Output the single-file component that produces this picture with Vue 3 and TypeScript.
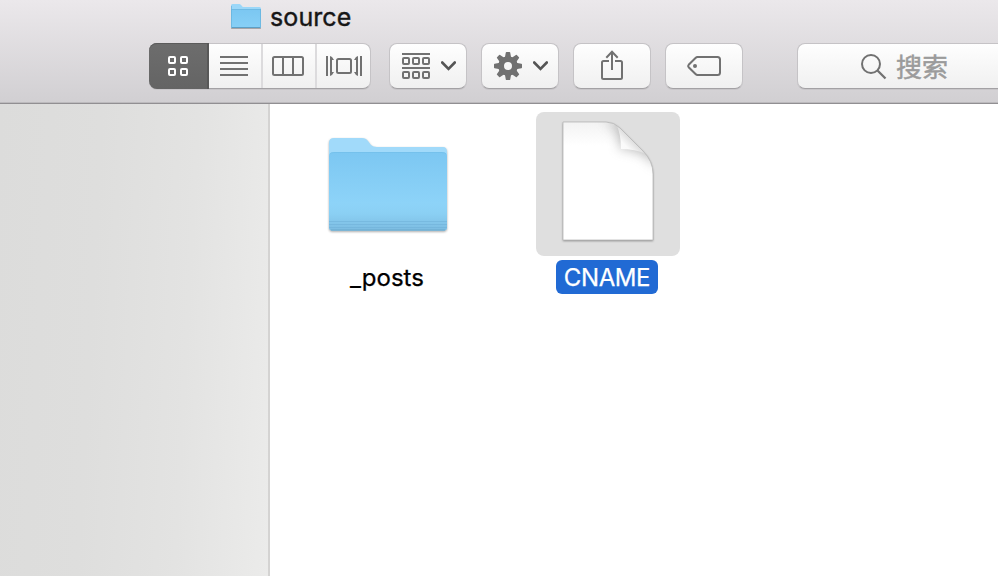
<script setup lang="ts">
import { ref } from 'vue'

type View = 'icons' | 'list' | 'columns' | 'flow'
const views: View[] = ['icons', 'list', 'columns', 'flow']
const active = ref<View>('icons')
const selected = ref('CNAME')
const files = [
  { name: '_posts', kind: 'folder' },
  { name: 'CNAME', kind: 'document' },
]
const teeth = [0, 45, 90, 135, 180, 225, 270, 315]
</script>

<template>
  <div class="window">
    <header class="chrome">
      <div class="title">
        <svg class="title-folder" width="32" height="28" viewBox="0 0 32 28">
          <defs>
            <linearGradient id="smallFront" x1="0" y1="0" x2="0" y2="1">
              <stop offset="0" stop-color="#7bc7f2" />
              <stop offset="1" stop-color="#87d0f6" />
            </linearGradient>
          </defs>
          <path d="M1 26V5.500Q1 4 2.500 4H9.500Q10.500 4 11.500 5.500Q12.500 7 13.500 7H29.500Q31 7 31 8.500V26Q31 28 29.500 28H2.500Q1 28 1 26Z" fill="#9bd7f8" />
          <path d="M1 9.500H31V26.500Q31 28 29.500 28H2.500Q1 28 1 26.500Z" fill="url(#smallFront)" />
          <path d="M1.500 9.500H30.500M1.500 6V27M30.500 9V27" stroke="#62afd9" stroke-width="1" fill="none" opacity=".65" />
          <path d="M1.500 27.500H30.500" stroke="#5c9fc5" />
        </svg>
        <span class="title-text">source</span>
      </div>
      <div class="toolbar">
        <div class="segments">
          <button v-for="v in views" :key="v" class="segment" :class="{ active: active === v }" @click="active = v">
            <svg v-if="v === 'icons'" width="20" height="20" fill="none" stroke="#fff" stroke-width="2">
              <rect x="1" y="1" width="6" height="6" rx="1" /><rect x="13" y="1" width="6" height="6" rx="1" />
              <rect x="1" y="13" width="6" height="6" rx="1" /><rect x="13" y="13" width="6" height="6" rx="1" />
            </svg>
            <svg v-else-if="v === 'list'" width="28" height="20" stroke="#717171" stroke-width="2">
              <path d="M0 1H28M0 7H28M0 13H28M0 19H28" />
            </svg>
            <svg v-else-if="v === 'columns'" width="32" height="20" fill="none" stroke="#717171" stroke-width="2">
              <rect x="1" y="1" width="30" height="18" rx="1.500" /><path d="M11 1V19M21 1V19" />
            </svg>
            <svg v-else width="36" height="20" fill="none" stroke="#717171" stroke-width="2">
              <path d="M1 0V20M35 0V20" />
              <rect x="11" y="3" width="14" height="14" rx="1.500" />
              <path d="M4 0L6 1L8 4L6 4V16L8 16L6 19L4 20ZM32 0L30 1L28 4L30 4V16L28 16L30 19L32 20Z" fill="#717171" stroke="none" />
            </svg>
          </button>
        </div>
        <button class="tool menu">
          <svg width="28" height="26" fill="none" stroke="#717171" stroke-width="2">
            <path d="M0 1H28M0 15H28" />
            <template v-for="y in [5, 19]" :key="y">
              <rect v-for="x in [1, 11, 21]" :key="x" :x="x" :y="y" width="6" height="6" rx="1" />
            </template>
          </svg>
          <svg class="chevron" width="15" height="10"><path d="M1.200 1.500L7.500 8L13.800 1.500" fill="none" stroke="#555" stroke-width="2.600" stroke-linecap="round" /></svg>
        </button>
        <button class="tool menu gear">
          <svg width="28" height="28" viewBox="-14 -14 28 28">
            <circle r="6.900" fill="none" stroke="#717171" stroke-width="5.800" />
            <path v-for="a in teeth" :key="a" d="M-3.200 -8L-2.200 -13.400Q-2.100 -14 -1.500 -14H1.500Q2.100 -14 2.200 -13.400L3.200 -8Z" fill="#717171" :transform="`rotate(${a})`" />
          </svg>
          <svg class="chevron" width="15" height="10"><path d="M1.200 1.500L7.500 8L13.800 1.500" fill="none" stroke="#555" stroke-width="2.600" stroke-linecap="round" /></svg>
        </button>
        <button class="tool">
          <svg width="22" height="30" class="share" fill="none" stroke="#717171" stroke-width="2">
            <path d="M8 11H2.500Q1 11 1 12.500V27.500Q1 29 2.500 29H19.500Q21 29 21 27.500V12.500Q21 11 19.500 11H14" />
            <path d="M11 20V1.500M5.300 7.700L11 1.800L16.700 7.700" />
          </svg>
        </button>
        <button class="tool">
          <svg width="34" height="20" fill="none" stroke="#717171" stroke-width="2">
            <path d="M10.500 1H30.500Q33 1 33 3.500V16.500Q33 19 30.500 19H10.500Q9.500 19 8.500 18L1.700 11.200Q.700 10 1.700 8.800L8.500 2Q9.500 1 10.500 1Z" />
            <circle cx="8" cy="10" r="2" fill="#717171" stroke="none" />
          </svg>
        </button>
        <div class="search">
          <svg width="26" height="26" fill="none" stroke="#717171">
            <circle cx="10" cy="10" r="9" stroke-width="2" /><path d="M16.500 16.500L24.500 24.500" stroke-width="2.300" />
          </svg>
          <span>搜索</span>
        </div>
      </div>
    </header>
    <div class="body">
      <aside class="sidebar"></aside>
      <main class="files">
        <div v-for="f in files" :key="f.name" class="file" :class="{ selected: selected === f.name }" @click="selected = f.name">
          <div class="thumb">
            <svg v-if="f.kind === 'folder'" class="art" width="144" height="144">
              <defs>
                <linearGradient id="front" x1="0" y1="0" x2="0" y2="1">
                  <stop offset="0" stop-color="#7cc7f2" />
                  <stop offset=".65" stop-color="#8dd3f8" />
                  <stop offset=".78" stop-color="#8bd0f4" />
                  <stop offset="1" stop-color="#7cbce1" />
                </linearGradient>
              </defs>
              <g class="folder-shadow">
                <path d="M13 115V31Q13 26 18 26H46Q50 26 52 29L55 33Q57 35 61 35H127Q131 35 131 40V115Q131 118.500 128 118.500H16Q13 118.500 13 115Z" fill="#a1dafa" />
                <path d="M13 44Q13 40 18 40H126Q131 40 131 44V115Q131 118.500 128 118.500H16Q13 118.500 13 115Z" fill="url(#front)" />
                <path d="M14 42Q15 40.500 18 40.500H126Q129 40.500 130 42" fill="none" stroke="#6bb8e4" stroke-width="1" opacity=".4" />
                <path d="M13 109.500H131M13 112.500H131M13 115.500H131" stroke="#6eafd7" opacity=".5" />
                <path d="M15 118H129" stroke="#6ba9cd" />
              </g>
            </svg>
            <svg v-else class="art" width="144" height="144">
              <defs>
                <linearGradient id="paper" x1="0" y1="0" x2="0" y2="1">
                  <stop offset="0" stop-color="#f3f3f3" /><stop offset=".2" stop-color="#fff" />
                </linearGradient>
                <linearGradient id="fold" x1="0" y1="1" x2=".5" y2=".5">
                  <stop offset="0" stop-color="#fff" /><stop offset=".6" stop-color="#fafafa" /><stop offset="1" stop-color="#dedede" />
                </linearGradient>
                <clipPath id="sheet"><path d="M27 10H70Q78 10 84 16L107 39Q117 49 117 62V128H27Z" /></clipPath>
                <filter id="soft" x="-50%" y="-50%" width="200%" height="200%"><feGaussianBlur stdDeviation="6" /></filter>
              </defs>
              <path class="paper-shadow" d="M27 10H70Q78 10 84 16L107 39Q117 49 117 62V128H27Z" fill="url(#paper)" />
              <g clip-path="url(#sheet)">
                <path d="M65 6Q85 14 84 37Q106 36 122 56L120 16Z" fill="#777" opacity=".5" filter="url(#soft)" />
                <path d="M80 12Q85 21 85 37Q99 37 110 42Z" fill="url(#fold)" />
              </g>
              <path d="M27 10H70Q78 10 84 16L107 39Q117 49 117 62V128H27Z" fill="none" stroke="#b8b8b8" stroke-width=".8" />
            </svg>
          </div>
          <span class="label">{{ f.name }}</span>
        </div>
      </main>
    </div>
  </div>
</template>

<style>
body { margin: 0; overflow: hidden; }
</style>

<style scoped>
.window { width: 998px; height: 576px; display: flex; flex-direction: column; overflow: hidden; background: #fff; font-family: Inter, "Noto Sans CJK SC", sans-serif; }
.chrome { box-sizing: border-box; height: 104px; flex: none; background: linear-gradient(#ebe8eb, #d1cfd2); border-bottom: 1px solid #918f92; box-shadow: inset 0 -1px #bcbabd; overflow: hidden; }
.title { height: 43px; display: flex; align-items: flex-start; padding-left: 230px; }
.title-folder { flex: none; filter: drop-shadow(0 1px .5px #0004); }
.title-text { margin-left: 8px; font-size: 25px; line-height: 34px; letter-spacing: .1px; color: #161616; -webkit-text-stroke: .4px #161616; }
.toolbar { display: flex; padding-left: 149px; width: max-content; }
button { appearance: none; border: 0; padding: 0; margin: 0; background: none; }
svg { display: block; flex: none; }
.segments, .tool, .search { box-sizing: border-box; height: 46px; border: 1px solid #c5c3c6; border-bottom-color: #a3a1a4; border-radius: 8px; background: linear-gradient(#fefefe, #f0f0f0); box-shadow: 0 1px #c8c6c9; }
.segments { width: 222px; display: flex; margin-right: 18px; }
.segment { box-sizing: border-box; flex: none; width: 54px; height: 44px; display: flex; align-items: center; justify-content: center; padding-right: 2px; border-right: 2px solid #dcdbdd; }
.segment:last-child { width: 53px; padding: 0 0 0 1px; border-right: 0; }
.segment.active { width: 60px; height: 46px; margin: -1px 0 -1px -1px; padding: 0; background: linear-gradient(#6d6d6d, #646464); border-right-color: #585858; border-radius: 8px 0 0 8px; box-shadow: inset 0 1px #5b5b5b; }
.tool { width: 78px; display: flex; align-items: center; justify-content: center; margin-right: 14px; }
.menu { justify-content: flex-start; padding-left: 12px; }
.menu .chevron { margin-left: 11px; }
.share { margin-top: -2px; }
.search { width: 230px; margin-left: 40px; display: flex; align-items: center; padding-left: 63px; color: #9b9b9b; font-family: "Noto Sans CJK SC", sans-serif; font-size: 26px; line-height: 40px; -webkit-text-stroke: .5px #9b9b9b; }
.search svg { margin-top: 2px; }
.search span { margin-left: 9px; }
.body { flex: 1; display: flex; min-height: 0; }
.sidebar { box-sizing: border-box; width: 270px; flex: none; border-right: 2px solid #d4d3d2; background: linear-gradient(93deg, #dcdcdb 0%, #dededd 35%, #e3e3e2 68%, #ebebea 100%); }
.files { display: flex; gap: 64px; padding: 8px 0 0 46px; align-items: flex-start; }
.file { width: 144px; display: flex; flex-direction: column; align-items: center; }
.file + .file { margin-left: 12px; }
.thumb { width: 144px; height: 144px; border-radius: 8px; }
.label { box-sizing: border-box; margin: 4px 2px 0 0; padding: 0 8px; height: 34px; line-height: 35px; font-size: 24px; color: #000; border-radius: 6px; -webkit-text-stroke: .25px; }
.selected .thumb { background: #dfdfdf; }
.selected .label { background: #216ad4; color: #fff; letter-spacing: -.4px; }
.folder-shadow { filter: drop-shadow(0 1px 1px #0005); }
.paper-shadow { filter: drop-shadow(0 1px 1px #0006); }
</style>
